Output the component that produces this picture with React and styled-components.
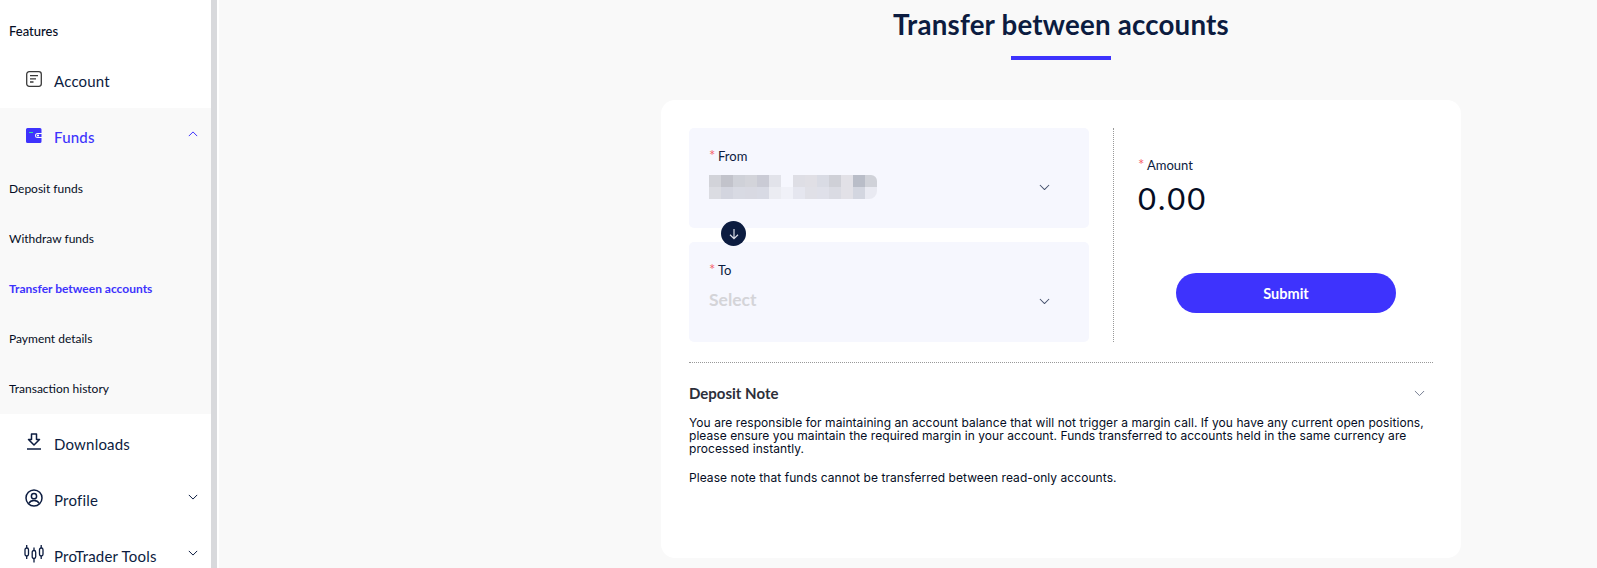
import React from 'react';
import styled, { createGlobalStyle } from 'styled-components';

const Global = createGlobalStyle`
  html, body { margin: 0; padding: 0; height: 568px; overflow: hidden; background: #f9f9f9; }
  body { font-family: Lato, "Liberation Sans", sans-serif; color: #0c1c40; }
  * { box-sizing: border-box; }
`;

const Page = styled.div`
  display: flex;
  width: 1597px;
  height: 568px;
  overflow: hidden;
`;

const Sidebar = styled.aside`
  width: 219px;
  flex: none;
  background: #fff;
  border-right: 2px solid #fff;
  display: flex;
  height: 568px;
  overflow: hidden;
`;

const SideList = styled.nav`
  width: 211px;
  flex: none;
`;

const ScrollThumb = styled.div`
  width: 6px;
  flex: none;
  background: #d8d9dc;
`;

const SectionTitle = styled.div`
  height: 54px;
  padding: 23px 0 0 9px;
  font-size: 13px;
  line-height: 16px;
  font-weight: 500;
  color: #050d24;
`;

const NavRow = styled.div`
  height: ${p => p.$h || 56}px;
  display: flex;
  align-items: center;
  padding-left: 24px;
  padding-top: ${p => p.$pt || 0}px;
  font-size: 15px;
  letter-spacing: 0.2px;
  color: ${p => (p.$active ? '#3e33fd' : '#0c1c40')};
  font-weight: ${p => (p.$active ? 500 : 400)};
`;

const NavIcon = styled.span`
  width: 20px;
  height: 20px;
  margin-right: 10px;
  display: flex;
  align-items: center;
  justify-content: center;
  position: relative;
  top: -2px;
`;

const NavLabel = styled.span`
  flex: 1;
`;

const NavCaret = styled.span`
  width: 10px;
  margin-right: 13px;
  display: flex;
  position: relative;
  top: -3px;
`;

const Group = styled.div`
  background: #f9f9f9;
  height: 306px;
  margin-bottom: 2px;
`;

const SubItem = styled.div`
  height: 50px;
  display: flex;
  align-items: center;
  padding: 0 0 2px 9px;
  font-size: 12px;
  font-weight: ${p => (p.$active ? 700 : 400)};
  color: ${p => (p.$active ? '#3e33fd' : '#050d24')};
`;

const Main = styled.main`
  flex: 1;
  padding-left: 442px;
  min-width: 0;
`;

const Content = styled.div`
  width: 800px;
`;

const Heading = styled.h1`
  margin: 0;
  padding-top: 8px;
  text-align: center;
  font-size: 27.7px;
  line-height: 34px;
  font-weight: 700;
  letter-spacing: 0.2px;
  color: #0c1c40;
`;

const HeadingBar = styled.div`
  width: 100px;
  height: 4px;
  margin: 14px auto 40px;
  background: #3e33fd;
`;

const Card = styled.section`
  height: 458px;
  background: #fff;
  border-radius: 14px;
  padding: 28px 28px 0;
`;

const TopRow = styled.div`
  display: flex;
  height: 214px;
`;

const Selects = styled.div`
  width: 400px;
  flex: none;
  display: flex;
  flex-direction: column;
  gap: 14px;
  position: relative;
`;

const SelectBox = styled.div`
  height: 100px;
  border-radius: 5px;
  background: #f6f7fe;
  padding: 20px 20px 0;
`;

const FieldLabel = styled.div`
  display: flex;
  align-items: center;
  font-size: 13px;
  line-height: 16px;
  color: #0c1c40;
`;

const Star = styled.span`
  color: #f5656b;
  font-size: 15px;
  width: 9px;
  line-height: 10px;
  position: relative;
  top: -1px;
`;

const SelectRow = styled.div`
  display: flex;
  align-items: center;
  justify-content: space-between;
  margin-top: 11px;
  height: 24px;
  padding-right: 19px;
`;

const Placeholder = styled.span`
  font-size: 17.5px;
  font-weight: 700;
  color: #d4d4d8;
  margin-top: -3px;
`;

const Pixels = styled.div`
  display: grid;
  grid-template-columns: repeat(14, 12px);
  grid-auto-rows: 12px;
  border-radius: 0 6px 8px 0;
  overflow: hidden;
`;

const Pixel = styled.span`
  background: ${p => p.$c};
`;

const SwapBadge = styled.div`
  position: absolute;
  left: 32px;
  top: 93px;
  z-index: 1;
  width: 25px;
  height: 25px;
  border-radius: 50%;
  background: #0c1c40;
  display: flex;
  align-items: center;
  justify-content: center;
`;

const AmountCol = styled.div`
  flex: 1;
  margin-left: 24px;
  border-left: 1px dotted #999;
  padding: 29px 0 0 24px;
`;

const AmountValue = styled.div`
  margin-top: 8px;
  font-size: 31px;
  line-height: 34px;
  letter-spacing: 2px;
  color: #050d24;
`;

const SubmitButton = styled.button`
  display: block;
  width: 220px;
  height: 40px;
  margin: 58px 0 0 38px;
  border: none;
  border-radius: 20px;
  background: #3e33fd;
  color: #fff;
  font-family: inherit;
  font-size: 14.5px;
  font-weight: 700;
`;

const Divider = styled.div`
  margin-top: 20px;
  border-top: 1px dotted #999;
  width: 744px;
`;

const NoteHead = styled.div`
  display: flex;
  align-items: center;
  justify-content: space-between;
  margin-top: 20px;
  height: 20px;
  padding-right: 8px;
  font-size: 15px;
  font-weight: 700;
  color: #2c2f3a;
`;

const NoteText = styled.p`
  margin: 13px 0 0;
  width: 744px;
  font-family: Inter, "Liberation Sans", sans-serif;
  font-size: 12px;
  line-height: 13px;
  letter-spacing: 0.06px;
  color: #050d24;
`;

const NoteGap = styled(NoteText)`
  margin-top: 16px;
`;

const Chevron = ({ up, color = '#0c1c40', size = 10, width = 1.2 }) => (
  <svg width={size} height={size * 0.6} viewBox="0 0 12 7" fill="none" stroke={color} strokeWidth={width}>
    <path d={up ? 'M1 6l5-5 5 5' : 'M1 1l5 5 5-5'} />
  </svg>
);

const AccountIcon = () => (
  <svg width="16" height="16" viewBox="0 0 16 16" fill="none" stroke="#3a3a3a" strokeWidth="1.3">
    <rect x="0.7" y="0.7" width="14.6" height="14.6" rx="2.5" />
    <path d="M4 4.7h8M4 7.8h6M4 11h3.5" />
  </svg>
);

const WalletIcon = () => (
  <svg width="16" height="15" viewBox="0 0 16 15">
    <path fill="#3e33fd" d="M1.500 0h12.500a1.500 1.500 0 0 1 1.500 1.500V5h-4a2.500 2.500 0 0 0 0 5h4v3.500a1.500 1.500 0 0 1-1.500 1.500H1.500A1.500 1.500 0 0 1 0 13.500V1.500A1.500 1.500 0 0 1 1.500 0z" />
    <path fill="#3e33fd" d="M11.500 6H15.500v3h-4a1.500 1.500 0 0 1 0-3z" />
    <path stroke="#35e0a0" strokeWidth="1" d="M3 4.500h4" />
    <circle cx="12" cy="7.500" r="1.100" fill="#fff" />
  </svg>
);

const DownloadIcon = () => (
  <svg width="16" height="18" viewBox="0 0 16 18" fill="none" stroke="#0c1c40" strokeWidth="1.5">
    <path d="M5.500 1h5v5.500h3L8 12 2.500 6.500h3z" strokeLinejoin="round" />
    <path d="M1 16h14" />
  </svg>
);

const ProfileIcon = () => (
  <svg width="18" height="18" viewBox="0 0 18 18" fill="none" stroke="#0c1c40" strokeWidth="1.5">
    <circle cx="9" cy="9" r="8" />
    <circle cx="9" cy="7.200" r="2.600" />
    <path d="M3.800 14.500c1-2.200 3-3 5.200-3s4.200.8 5.200 3" />
  </svg>
);

const ToolsIcon = () => (
  <svg width="20" height="18" viewBox="0 0 20 18" fill="none" stroke="#0c1c40" strokeWidth="1.300">
    <rect x="1" y="3" width="3.500" height="8" rx="1.700" />
    <path d="M2.700 0v3M2.700 11v3" />
    <rect x="8.200" y="5.500" width="3.500" height="8" rx="1.700" />
    <path d="M10 2.500v3M10 13.500v4" />
    <rect x="15.500" y="3" width="3.500" height="8" rx="1.700" />
    <path d="M17.200 0v3M17.200 11v3" />
  </svg>
);

const ArrowDown = () => (
  <svg width="12" height="12" viewBox="0 0 12 12" fill="none" stroke="#d9dce6" strokeWidth="1.2">
    <path d="M6 1v9.500M2 6.800l4 3.800 4-3.800" />
  </svg>
);

const pixelColors = [
  '#d2d3d9', '#c2c3cb', '#cfd1d8', '#d3d4da', '#cacbd5', '#e2e3ea', '#f6f7fe', '#dedee5', '#e0dfe5', '#d9dbe4', '#cfd0d7', '#e2e1e7', '#b9bdc8', '#d0d2d9',
  '#dbdce2', '#d3d5df', '#d8dae3', '#d8d9e2', '#d8dae4', '#ebecf2', '#f0f1f8', '#e5e6ef', '#e0e0e7', '#dfe0e9', '#dadbe3', '#e2e1e7', '#d3d6e0', '#e9eaf2',
];

const subItems = ['Deposit funds', 'Withdraw funds', 'Transfer between accounts', 'Payment details', 'Transaction history'];

export default function App() {
  return (
    <Page>
      <Global />
      <Sidebar>
        <SideList>
          <SectionTitle>Features</SectionTitle>
          <NavRow $h={54}>
            <NavIcon><AccountIcon /></NavIcon>
            <NavLabel>Account</NavLabel>
          </NavRow>
          <Group>
            <NavRow $active $pt={2}>
              <NavIcon><WalletIcon /></NavIcon>
              <NavLabel>Funds</NavLabel>
              <NavCaret><Chevron up color="#3e33fd" /></NavCaret>
            </NavRow>
            {subItems.map(item => (
              <SubItem key={item} $active={item === 'Transfer between accounts'}>{item}</SubItem>
            ))}
          </Group>
          <NavRow>
            <NavIcon><DownloadIcon /></NavIcon>
            <NavLabel>Downloads</NavLabel>
          </NavRow>
          <NavRow>
            <NavIcon><ProfileIcon /></NavIcon>
            <NavLabel>Profile</NavLabel>
            <NavCaret><Chevron /></NavCaret>
          </NavRow>
          <NavRow>
            <NavIcon><ToolsIcon /></NavIcon>
            <NavLabel>ProTrader Tools</NavLabel>
            <NavCaret><Chevron /></NavCaret>
          </NavRow>
        </SideList>
        <ScrollThumb />
      </Sidebar>
      <Main>
        <Content>
          <Heading>Transfer between accounts</Heading>
          <HeadingBar />
          <Card>
            <TopRow>
              <Selects>
                <SelectBox>
                  <FieldLabel><Star>*</Star>From</FieldLabel>
                  <SelectRow>
                    <Pixels>
                      {pixelColors.map((c, i) => <Pixel key={i} $c={c} />)}
                    </Pixels>
                    <Chevron color="#44506c" size={11} width={1.1} />
                  </SelectRow>
                </SelectBox>
                <SwapBadge><ArrowDown /></SwapBadge>
                <SelectBox>
                  <FieldLabel><Star>*</Star>To</FieldLabel>
                  <SelectRow>
                    <Placeholder>Select</Placeholder>
                    <Chevron color="#44506c" size={11} width={1.1} />
                  </SelectRow>
                </SelectBox>
              </Selects>
              <AmountCol>
                <FieldLabel><Star>*</Star>Amount</FieldLabel>
                <AmountValue>0.00</AmountValue>
                <SubmitButton>Submit</SubmitButton>
              </AmountCol>
            </TopRow>
            <Divider />
            <NoteHead>
              Deposit Note
              <Chevron color="#6a7388" size={11} width={1} />
            </NoteHead>
            <NoteText>
              You are responsible for maintaining an account balance that will not trigger a margin call. If you have any current open positions, please ensure you maintain the required margin in your account. Funds transferred to accounts held in the same currency are processed instantly.
            </NoteText>
            <NoteGap>Please note that funds cannot be transferred between read-only accounts.</NoteGap>
          </Card>
        </Content>
      </Main>
    </Page>
  );
}
